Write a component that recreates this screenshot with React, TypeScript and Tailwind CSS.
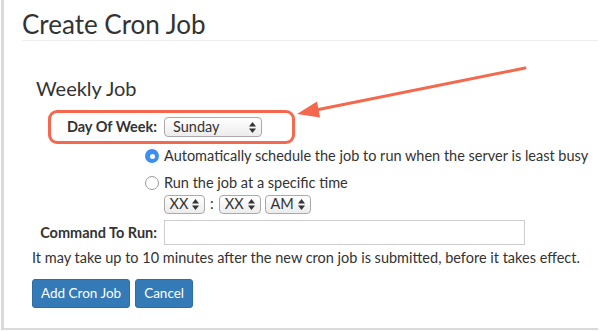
import type React from 'react';

const FONT = "font-['Lato','Open_Sans',sans-serif]";

export default function App() {
  return (
    <div className={`relative h-[331px] w-[605px] overflow-hidden bg-white pl-px text-[#333] ${FONT}`}>
      <div className="h-[330px] w-[597px] border-b-[2px] border-l-[3px] border-[#dadada] bg-white">
        <div className="pl-[18px] pt-[10px]">
          <h1 className="border-b border-[#eee] pb-px text-[26px] leading-[29px] font-normal text-[#333]">
            Create Cron Job
          </h1>
        </div>

        <div className="pl-[28px] pt-[35px]">
          <h2 className="pl-[4px] text-[20px] leading-[24px] font-normal">Weekly Job</h2>

          <div className="mt-[10px] ml-[16px] inline-flex h-[34px] items-center rounded-[9px] border-[3px] border-[#f4694e] pr-[30px]">
            <label className="w-[113px] pr-[7px] text-right text-[14.5px] font-bold">Day Of Week:</label>
            <Select value="Sunday" className="w-[98px]" />
          </div>

          <div className="mt-[3px] flex h-[18px] items-center pl-[113px] text-[14.5px]">
            <Radio checked />
            <span className="ml-[5px]">Automatically schedule the job to run when the server is least busy</span>
          </div>

          <div className="mt-[9px] flex h-[18px] items-center pl-[113px] text-[14.5px]">
            <Radio />
            <span className="ml-[5px]">Run the job at a specific time</span>
          </div>

          <div className="mt-[2px] flex h-[20px] items-center pl-[132px] text-[14.5px]">
            <Select value="XX" className="w-[41px] justify-center" small />
            <span className="mx-[5px]">:</span>
            <Select value="XX" className="w-[42px] justify-center" small />
            <Select value="AM" className="ml-[4px] w-[46px] justify-center" small />
          </div>

          <div className="mt-[6px] flex items-center text-[14.5px]">
            <label className="w-[132px] pr-[7px] text-right font-bold">Command To Run:</label>
            <input className="h-[25px] w-[361px] border border-[#ccc] bg-white outline-none" />
          </div>

          <p className="mt-[4px] text-[14.5px] leading-[17px]">
            It may take up to 10 minutes after the new cron job is submitted, before it takes effect.
          </p>

          <div className="mt-[13px] flex gap-[5px]">
            <Button>Add Cron Job</Button>
            <Button>Cancel</Button>
          </div>
        </div>
      </div>

      <svg className="pointer-events-none absolute top-0 left-0" width="605" height="331">
        <line x1="525" y1="68" x2="316" y2="110" stroke="#f4694e" strokeWidth="3" strokeLinecap="round" />
        <polygon points="297,114 320,117.5 317,101.5" fill="#f4694e" />
      </svg>
    </div>
  );
}

function Select({ value, className = '', small }: { value: string; className?: string; small?: boolean }) {
  return (
    <div
      className={`flex items-center rounded-[4px] border border-[#aaa] bg-gradient-to-b from-white to-[#ececec] text-[14.5px] leading-none ${
        small ? 'h-[19px] gap-[4px] px-[4px]' : 'h-[20px] justify-between pr-[5px] pl-[8px]'
      } ${className}`}
    >
      <span>{value}</span>
      <Spinner />
    </div>
  );
}

function Spinner() {
  return (
    <svg width="7" height="11" viewBox="0 0 7 11">
      <polygon points="3.5,0 7,4.5 0,4.5" fill="#333" />
      <polygon points="3.5,11 7,6.5 0,6.5" fill="#333" />
    </svg>
  );
}

function Radio({ checked }: { checked?: boolean }) {
  return checked ? (
    <span className="flex size-[14px] items-center justify-center rounded-full bg-[#3b8ff0]">
      <span className="size-[5px] rounded-full bg-white" />
    </span>
  ) : (
    <span className="size-[14px] rounded-full border border-[#9a9a9a] bg-white" />
  );
}

function Button({ children }: { children: React.ReactNode }) {
  return (
    <button className="h-[29px] rounded-[3px] border border-[#2e6da4] bg-[#337ab7] px-[8px] text-[13.5px] text-white">
      {children}
    </button>
  );
}
